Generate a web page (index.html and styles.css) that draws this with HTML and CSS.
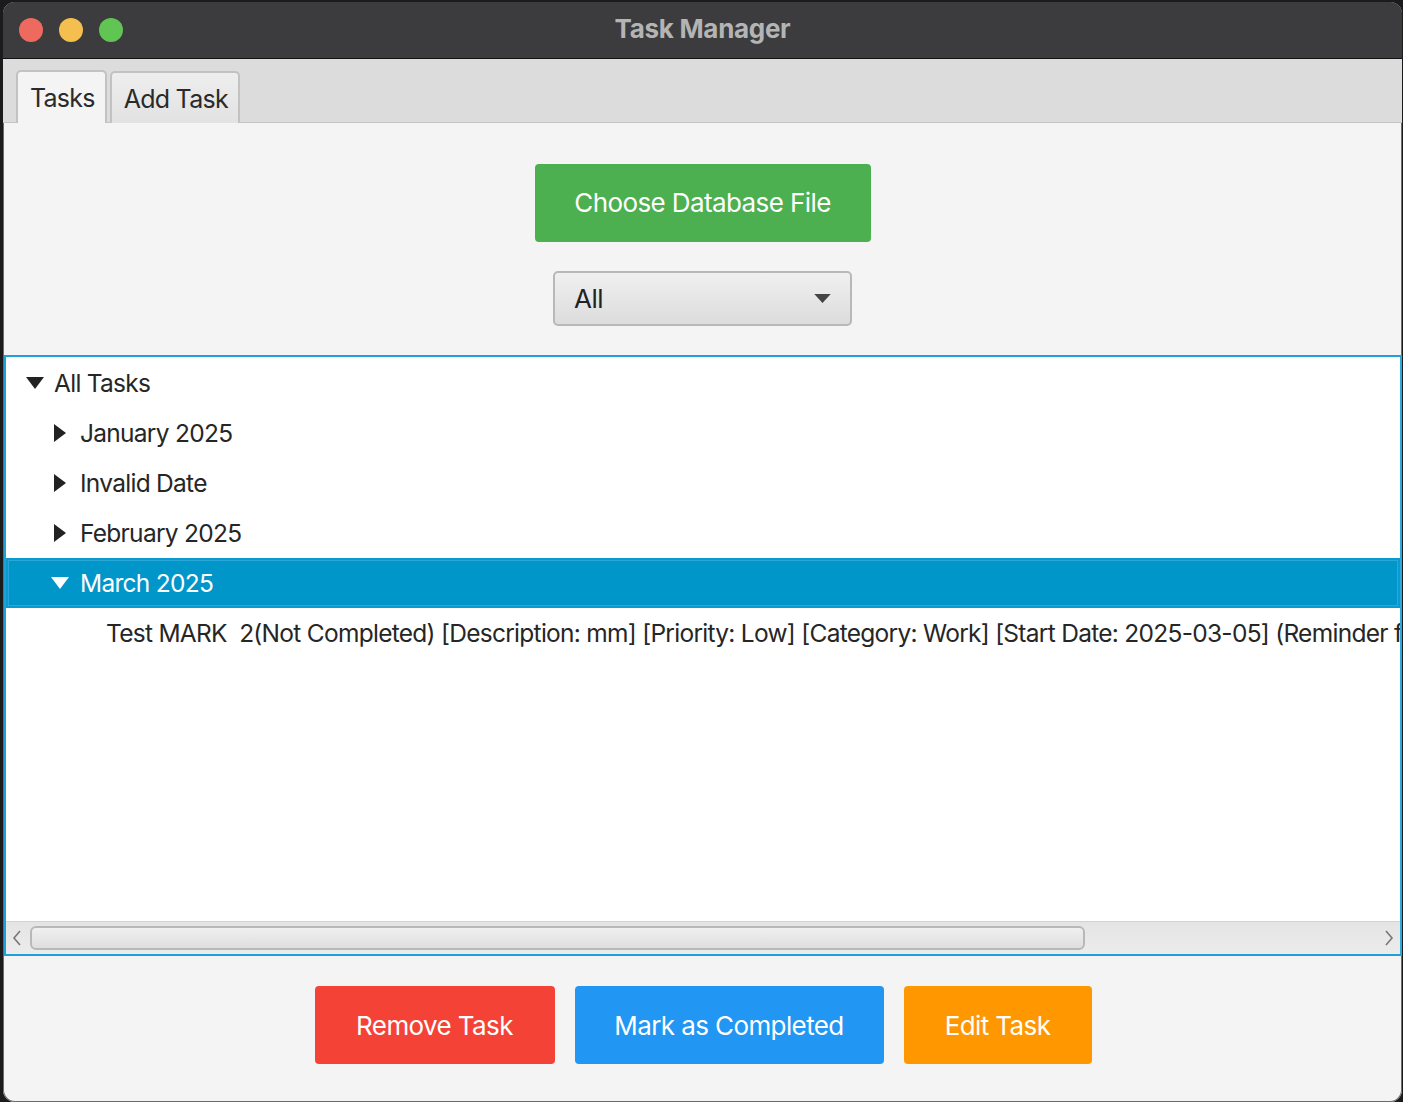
FILE: index.html
```html
<!DOCTYPE html>
<html>
<head>
<meta charset="utf-8">
<link rel="stylesheet" href="styles.css">
</head>
<body>
<div class="window">
  <div class="titlebar">
    <div class="lights">
      <span class="light red"></span>
      <span class="light yellow"></span>
      <span class="light green"></span>
    </div>
    <div class="title">Task Manager</div>
  </div>
  <div class="tabbar">
    <div class="tab selected">Tasks</div>
    <div class="tab">Add Task</div>
  </div>
  <div class="content">
    <div class="top-controls">
      <button class="btn btn-green">Choose Database File</button>
      <div class="combo">
        <span>All</span>
        <svg class="combo-arrow" width="20" height="12" viewBox="0 0 20 12"><path d="M1 1 L19 1 L10 11 Z" fill="#444"/></svg>
      </div>
    </div>
    <div class="tree">
      <div class="tree-rows">
        <div class="row lvl0"><span class="disc"><svg width="18" height="12" viewBox="0 0 18 12"><path d="M0 0 L18 0 L9 12 Z" fill="#222"/></svg></span>All Tasks</div>
        <div class="row lvl1"><span class="disc"><svg width="12" height="18" viewBox="0 0 12 18"><path d="M0 0 L12 9 L0 18 Z" fill="#222"/></svg></span>January 2025</div>
        <div class="row lvl1"><span class="disc"><svg width="12" height="18" viewBox="0 0 12 18"><path d="M0 0 L12 9 L0 18 Z" fill="#222"/></svg></span>Invalid Date</div>
        <div class="row lvl1"><span class="disc"><svg width="12" height="18" viewBox="0 0 12 18"><path d="M0 0 L12 9 L0 18 Z" fill="#222"/></svg></span>February 2025</div>
        <div class="row lvl1 sel"><span class="disc"><svg width="18" height="12" viewBox="0 0 18 12"><path d="M0 0 L18 0 L9 12 Z" fill="#fff"/></svg></span>March 2025</div>
        <div class="row lvl2"><span class="task-text">Test MARK&nbsp; 2(Not Completed) [Description: mm] [Priority: Low] [Category: Work] [Start Date: 2025-03-05] (Reminder for the task set)</span></div>
      </div>
      <div class="hscroll">
        <svg class="arr" width="10" height="16" viewBox="0 0 10 16"><path d="M8 1 L2 8 L8 15" fill="none" stroke="#777" stroke-width="1.6"/></svg>
        <div class="track"><div class="thumb"></div></div>
        <svg class="arr" width="10" height="16" viewBox="0 0 10 16"><path d="M2 1 L8 8 L2 15" fill="none" stroke="#777" stroke-width="1.6"/></svg>
      </div>
    </div>
    <div class="actions">
      <button class="btn btn-red">Remove Task</button>
      <button class="btn btn-blue">Mark as Completed</button>
      <button class="btn btn-orange">Edit Task</button>
    </div>
  </div>
</div>
</body>
</html>
```

FILE: styles.css
```css
html, body {
  margin: 0;
  padding: 0;
  background: #1b1b1b;
  width: 1403px;
  height: 1102px;
  overflow: hidden;
}
body {
  font-family: Inter, "Noto Sans", sans-serif;
}
.window {
  margin: 2px 1px 0 3px;
  height: 1100px;
  border-radius: 12px;
  overflow: hidden;
  background: #f4f4f4;
  display: flex;
  flex-direction: column;
  box-shadow: inset 0 0 0 1px #6a6a6a;
}
.titlebar {
  height: 56px;
  flex: none;
  background: #3c3c3e;
  border-bottom: 1px solid #111;
  position: relative;
  display: flex;
  align-items: center;
  justify-content: center;
}
.lights {
  position: absolute;
  left: 16px;
  top: 16px;
  display: flex;
  gap: 16px;
}
.light {
  width: 24px;
  height: 24px;
  border-radius: 50%;
  display: block;
}
.red { background: #ee6a5f; }
.yellow { background: #f5bf4f; }
.green { background: #61c554; }
.title {
  color: #b4b4b4;
  font-weight: 700;
  font-size: 26px;
  letter-spacing: -0.3px;
  margin-left: 0;
  margin-top: -4px;
}
.tabbar {
  flex: none;
  background: #dcdcdc;
  border-bottom: 1px solid #c4c4c4;
  display: flex;
  align-items: flex-end;
  padding-left: 13px;
  gap: 3px;
  box-sizing: border-box;
  height: 64px;
}
.tab {
  height: 52px;
  box-sizing: border-box;
  border: 2px solid #c2c2c2;
  border-bottom: none;
  border-radius: 5px 5px 0 0;
  background: linear-gradient(#eeeeee, #e2e2e2);
  font-size: 25px;
  letter-spacing: -0.75px;
  color: #2a2a2a;
  padding: 11px 10px 0 12px;
  margin-bottom: -1px;
}
.tab.selected {
  background: #f4f4f4;
  height: 53px;
  padding-left: 12px;
  padding-right: 10px;
}
.content {
  flex: 1;
  display: flex;
  flex-direction: column;
}
.top-controls {
  display: flex;
  flex-direction: column;
  align-items: center;
  padding-top: 41px;
  gap: 29px;
  padding-bottom: 30px;
}
.btn {
  border: none;
  border-radius: 4px;
  color: #fff;
  font-family: Inter, "Noto Sans", sans-serif;
  font-size: 26px;
  height: 78px;
  padding: 0;
  letter-spacing: -0.6px;
}
.btn-green {
  background: #4caf50;
  width: 336px;
  height: 78px;
  padding-bottom: 2px;
}
.combo {
  width: 299px;
  height: 55px;
  box-sizing: border-box;
  border: 2px solid #b8b8b8;
  border-radius: 5px;
  background: linear-gradient(#f0f0f0, #dcdcdc);
  display: flex;
  align-items: center;
  justify-content: space-between;
  padding: 0 18px 0 19px;
  font-size: 26px;
  letter-spacing: -0.5px;
  color: #222;
}
.combo-arrow { width: 19px; height: 11px; }
.tree {
  margin-left: 1px;
  margin-top: -1px;
  height: 601px;
  box-sizing: border-box;
  border: 2px solid #1fa0d8;
  border-right-color: #2fa8dc;
  background: #fff;
  display: flex;
  flex-direction: column;
}
.tree-rows {
  flex: 1;
  padding-top: 1px;
  overflow: hidden;
}
.row {
  height: 50px;
  display: flex;
  align-items: center;
  font-size: 24.5px;
  color: #262626;
  white-space: nowrap;
  box-sizing: border-box;
  letter-spacing: -0.72px;
  padding-bottom: 0;
}
.task-text { flex: none; }
.disc {
  width: 26px;
  flex: none;
  display: flex;
  align-items: center;
}
.lvl0 { padding-left: 20px; }
.lvl0 .disc { width: 28px; }
.lvl1 { padding-left: 48px; }
.lvl1 .disc { width: 26px; }
.lvl2 { padding-left: 100px; }
.row.sel {
  background: #0096c9;
  color: #fff;
  box-shadow: inset 0 0 0 2px #0a9ad0, inset 0 0 0 3px #2aa7d7;
  padding-left: 45px;
}
.row.sel .disc { width: 29px; }
.hscroll {
  flex: none;
  background: linear-gradient(#e4e4e4, #ececec);
  border-top: 1px solid #d2d2d2;
  display: flex;
  align-items: center;
  padding: 0 6px 0 6px;
  gap: 8px;
  box-sizing: border-box;
  height: 33px;
}
.arr { flex: none; }
.track {
  flex: 1;
  height: 24px;
  display: flex;
  align-items: center;
}
.thumb {
  width: 1055px;
  height: 24px;
  box-sizing: border-box;
  border: 2px solid #b8b8b8;
  border-radius: 6px;
  background: linear-gradient(#f0f0f0, #dedede);
}
.actions {
  display: flex;
  justify-content: center;
  gap: 20px;
  padding-top: 30px;
  margin-left: 1px;
}
.btn-red { background: #f44336; width: 240px; }
.btn-blue { background: #2196f3; width: 309px; }
.btn-orange { background: #ff9800; width: 188px; }
```
